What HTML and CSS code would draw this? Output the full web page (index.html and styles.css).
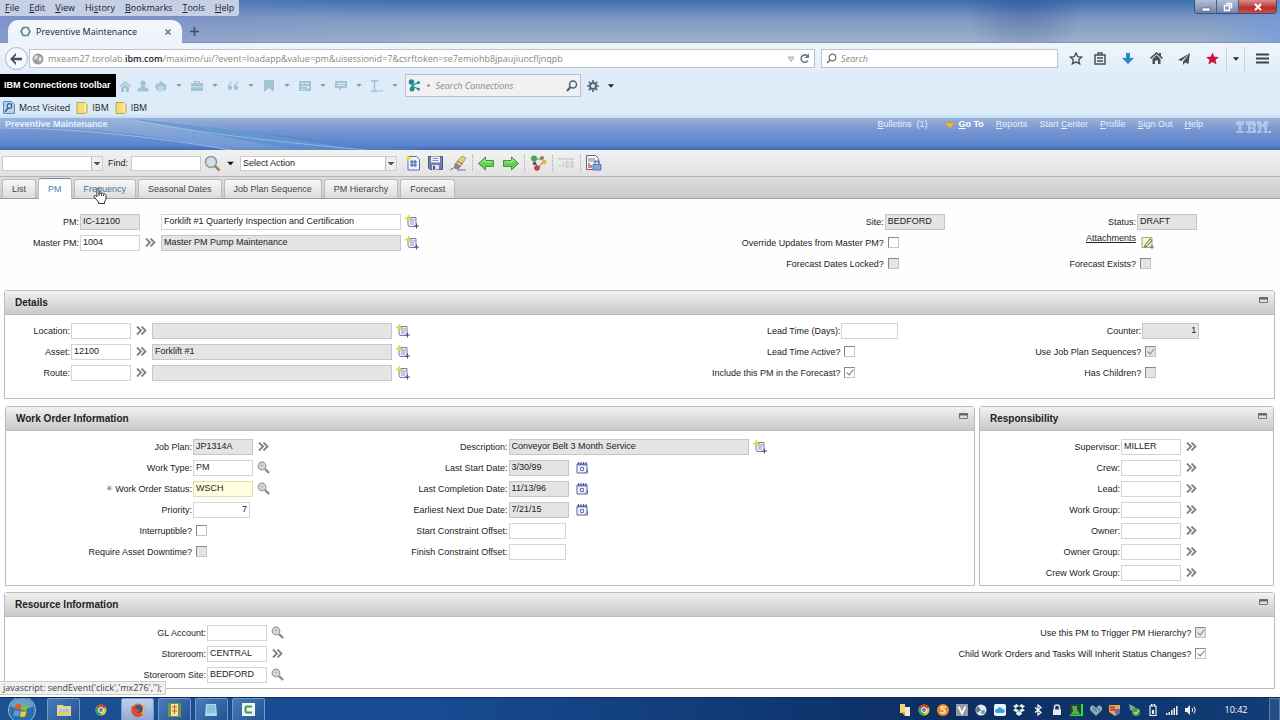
FILE: index.html
```html
<!DOCTYPE html>
<html lang="en">
<head>
<meta charset="utf-8">
<title>Preventive Maintenance</title>
<link rel="stylesheet" href="styles.css">
</head>
<body>
<svg class="sprite" aria-hidden="true">
  <symbol id="chev" viewBox="0 0 11 9"><path d="M1 .5l4 4-4 4M5.5.5l4 4-4 4" fill="none" stroke="#808080" stroke-width="1.800"/></symbol>
  <symbol id="long" viewBox="0 0 14 14"><path d="M3 2.500h8v7l1 2H4l-1-2z" fill="#eeeefa" stroke="#7c7cb4"/><path d="M5 5h5M5 7h4M5 9h4" stroke="#9a9ac4"/><path d="M9 11h5M11.500 8.500v5" stroke="#4b4b8c"/><path d="M3.500 0l1 2.500 2.500 1-2.500 1-1 2.500-1-2.500L0 3.500l2.500-1z" fill="#dfe03c" stroke="#b9bb3a" stroke-width=".4"/></symbol>
  <symbol id="lens" viewBox="0 0 13 13"><circle cx="5" cy="5" r="3.800" fill="#ddd" stroke="#999" stroke-width="1.200"/><path d="M3 4.500h4M5 3v4" stroke="#bbb"/><path d="M8 8l4 4" stroke="#888" stroke-width="2.400"/></symbol>
  <symbol id="cal" viewBox="0 0 12 13"><path d="M1 3h10v7l-2 2H1z" fill="#f2f2fb" stroke="#5a62a4"/><path d="M1 3.500h10" stroke="#7c84bd" stroke-width="2"/><path d="M2.500 1v3M5 1v3M7.500 1v3M10 1v3" stroke="#4b559b"/><path d="M4.500 6.500h3v3h-3zM11.500 8v4h-3" fill="none" stroke="#6a72ae"/></symbol>
  <symbol id="fold" viewBox="0 0 9 7"><path d="M.5.500h8v5h-8z" fill="#ddd" stroke="#777"/><path d="M0 1.500h9" stroke="#666" stroke-width="2"/></symbol>
  <symbol id="down" viewBox="0 0 7 4"><path d="M0 0h7L3.500 4z" fill="currentColor"/></symbol>
  <symbol id="folder" viewBox="0 0 12 13"><path d="M1 1.500h8l2 2v8l-2 1H1z" fill="#f3df74" stroke="#bca544"/><path d="M9 2v10" stroke="#fff3b0" stroke-width="1.500"/></symbol>
  <symbol id="chrome" viewBox="0 0 12 12"><circle cx="6" cy="6" r="5.500" fill="#e8c534"/><path d="M6 6L1.200 3.200A5.500 5.500 0 0 1 10.900 3.500z" fill="#d9432f"/><path d="M6 6L1.200 3.200A5.500 5.500 0 0 0 5.500 11.500L7 8z" fill="#45a048"/><circle cx="6" cy="6" r="2.500" fill="#3d7fd6" stroke="#fff"/></symbol>
</svg>

<header class="browser">
  <div class="titlebar">
    <div class="titlerow">
      <nav class="menubar" aria-label="Browser menu">
        <button><u>F</u>ile</button><button><u>E</u>dit</button><button><u>V</u>iew</button><button>Hi<u>s</u>tory</button><button><u>B</u>ookmarks</button><button><u>T</u>ools</button><button><u>H</u>elp</button>
      </nav>
      <div class="wincontrols">
        <button aria-label="Minimize"><svg width="10" height="10"><path d="M1 6h8v3H1z" fill="#fff" stroke="#445" stroke-width=".5"/></svg></button>
        <button aria-label="Restore"><svg width="10" height="10"><path d="M3.500 1.500h5v5M1.500 3.500h5v5h-5z" fill="none" stroke="#fff" stroke-width="1.500"/></svg></button>
        <button class="close" aria-label="Close"><svg width="10" height="10"><path d="M2 2l6 6M8 2l-6 6" stroke="#fff" stroke-width="2"/></svg></button>
      </div>
    </div>
    <div class="tabstrip">
      <div class="browsertab">
        <svg width="11" height="11" viewBox="0 0 11 11"><path d="M3.200 1.500h4.600L10 5.500 7.800 9.500H3.200L1 5.500z" fill="none" stroke="#5f8793" stroke-width="1.700"/></svg>
        <span class="tabtitle">Preventive Maintenance</span>
        <button aria-label="Close tab"><svg width="8" height="8"><path d="M1.500 1.500l5 5M6.500 1.500l-5 5" stroke="#777" stroke-width="1.700"/></svg></button>
      </div>
      <button class="newtab" aria-label="New tab"><svg width="9" height="9"><path d="M4.500 0v9M0 4.500h9" stroke="#3e4a66" stroke-width="1.500"/></svg></button>
    </div>
  </div>

  <div class="navbar">
    <button class="back" aria-label="Back"><svg width="13" height="12"><path d="M6 0v2.500L3.800 4.700H12v2.600H3.800L6 9.500V12L0 6z" fill="#4a5058"/></svg></button>
    <div class="urlbox">
      <svg width="12" height="12"><circle cx="6" cy="6" r="5.500" fill="#9c9c9c"/><path d="M3 2l3 1-1 3-3 1M8 3l2 3-2 3-2-2z" fill="#e2e2e2"/></svg>
      <span class="url">mxeam27.torolab.<b>ibm.com</b>/maximo/ui/?event=loadapp&amp;value=pm&amp;uisessionid=7&amp;csrftoken=se7emiohb8jpaujiuocfljnqpb</span>
      <svg width="8" height="6"><path d="M1 1h6L4 5.500z" fill="#ddd" stroke="#aaa"/></svg>
      <svg width="11" height="11"><path d="M8.500 3A3.700 3.700 0 1 0 9 7.500" fill="none" stroke="#777" stroke-width="1.600"/><path d="M10 .5v4.500H5.500z" fill="#777"/></svg>
    </div>
    <div class="searchbox">
      <svg width="11" height="11"><circle cx="6.500" cy="4.500" r="3.300" fill="none" stroke="#777" stroke-width="1.300"/><path d="M4 7L1 10" stroke="#777" stroke-width="1.700"/></svg>
      <input type="search" placeholder="Search" aria-label="Search the web">
    </div>
    <div class="navicons">
      <button class="star" aria-label="Bookmark"><svg width="14" height="13" viewBox="0 0 14 13"><path d="M7 1l1.700 3.700 4 .4-3 2.700.9 4L7 9.800l-3.600 2 .9-4-3-2.700 4-.4z" fill="none" stroke="#4a5058" stroke-width="1.400"/></svg></button>
      <button aria-label="Bookmarks list"><svg width="12" height="13"><path d="M1 3h10v9H1zM4 3V1h4v2M3 6h6M3 9h6" fill="none" stroke="#4a5058" stroke-width="1.500"/></svg></button>
      <button aria-label="Downloads"><svg width="12" height="13"><path d="M4 1h4v5h4L6 12 0 6h4z" fill="#2a8cc4"/></svg></button>
      <button aria-label="Home"><svg width="13" height="13"><path d="M.5 6.500l6-5.500 6 5.500" fill="none" stroke="#4a5058" stroke-width="1.600"/><path d="M2.500 7l4-4 4 4v5H8V8.500H5V12H2.500zM9 1h2v3H9z" fill="#4a5058"/></svg></button>
      <button aria-label="Share"><svg width="13" height="13"><path d="M12 1L0 8l3.500 1zM12 1L5 9.500V13l2-2.500 3.500 1.500z" fill="#4a5058"/></svg></button>
      <button aria-label="Favourite"><svg width="13" height="13" viewBox="0 0 14 13"><path d="M7 0l2 4.500 5 .4-3.800 3.200L11.500 13 7 10.300 2.500 13l1.300-4.900L0 4.900l5-.4z" fill="#cf1236"/></svg></button>
      <button class="narrow" aria-label="More"><svg width="6" height="4"><use href="#down"/></svg></button>
      <button class="burger" aria-label="Menu"><svg width="13" height="11"><path d="M0 1.500h13M0 5.500h13M0 9.500h13" stroke="#3d434b" stroke-width="2"/></svg></button>
    </div>
  </div>

  <div class="connbar">
    <strong>IBM Connections toolbar</strong>
    <div class="connicons">
      <svg width="12" height="12"><path d="M0 6l6-5 6 5-1 1-5-4-5 4zM2 7.500L6 4l4 3.500V12H7V8.500H5V12H2z"/></svg>
      <svg width="12" height="12" viewBox="0 0 13 12"><path d="M6.500 0a3 3 0 0 1 2 5.200V7l4 2v3H.5V9l4-2V5.200A3 3 0 0 1 6.500 0z"/></svg>
      <svg width="12" height="12" viewBox="0 0 13 12"><path d="M6.500 1a2 2 0 0 1 2 3l2-1 2 3-1 5H9V6H8v6H7V6H6v6H5V6H4v5H2L0 6l2-3 2.500 1a2 2 0 0 1 2-3z"/></svg>
      <svg class="dd" width="6" height="3"><use href="#down"/></svg>
      <svg width="12" height="12"><path d="M0 3h3V1h6v2h3v8H0zM4.500 2v1h3V2zM0 6.500h12v.7H0z" fill-rule="evenodd"/></svg>
      <svg class="dd" width="6" height="3"><use href="#down"/></svg>
      <svg width="12" height="12" viewBox="0 0 13 12"><path d="M5.500 1C2 2 1 5 1 8a2.400 2.400 0 1 0 2-2.400C3 4 4 3 5.500 2.300zM12 1C8.500 2 7.500 5 7.500 8a2.400 2.400 0 1 0 2-2.400C9.500 4 10.500 3 12 2.300z"/></svg>
      <svg class="dd" width="6" height="3"><use href="#down"/></svg>
      <svg width="12" height="12"><path d="M1 0h10v12L6 8l-5 4z"/></svg>
      <svg class="dd" width="6" height="3"><use href="#down"/></svg>
      <svg width="12" height="12"><path d="M0 1h12v10H0zM2 3v1h3V3zm4 0v1h4V3zM2 6v1h5V6zm6 0v3l2-1V6zM2 9v1h4V9z" fill-rule="evenodd"/></svg>
      <svg class="dd" width="6" height="3"><use href="#down"/></svg>
      <svg width="12" height="12"><path d="M0 1h12v7H7l-3 3V8H0zM2 3v1h8V3zm0 2v1h8V5z" fill-rule="evenodd"/></svg>
      <svg class="dd" width="6" height="3"><use href="#down"/></svg>
      <svg width="12" height="12"><path d="M0 0h7v1.500H4.300v9H7V12H0v-1.500h2.700v-9H0zM8 10h1.500v1.500H8zM10.500 10H12v1.500h-1.500z"/></svg>
      <svg class="dd" width="6" height="3"><use href="#down"/></svg>
    </div>
    <div class="connsearch">
      <svg width="13" height="13"><circle cx="3.500" cy="3" r="2.800" fill="#238a96"/><circle cx="4" cy="10" r="2.500" fill="#238a96"/><circle cx="10.500" cy="3.500" r="1.500" fill="#238a96"/><circle cx="10.500" cy="10" r="1.500" fill="#238a96"/><path d="M4 3v7M4 7l6-3.500M4 7l6 3" stroke="#238a96" stroke-width="1.300"/></svg>
      <span class="bullet"></span>
      <input type="search" placeholder="Search Connections" aria-label="Search Connections">
      <svg width="12" height="12"><circle cx="7" cy="4.500" r="3.500" fill="none" stroke="#4b617e" stroke-width="1.500"/><path d="M4.500 7L1 11" stroke="#4b617e" stroke-width="2"/></svg>
    </div>
    <button aria-label="Settings"><svg width="12" height="12"><circle cx="6" cy="6" r="3" fill="none" stroke="#5d6670" stroke-width="2"/><path d="M6 0v2M6 10v2M0 6h2M10 6h2M1.800 1.800l1.500 1.500M8.700 8.700l1.500 1.500M10.200 1.800L8.700 3.300M3.300 8.700l-1.500 1.500" stroke="#5d6670" stroke-width="1.700"/></svg></button>
    <button aria-label="Settings menu"><svg width="6" height="4"><use href="#down"/></svg></button>
  </div>

  <nav class="bookmarks" aria-label="Bookmarks">
    <a href="#"><svg width="12" height="13"><path d="M.5.500h8l3 3v9H.5z" fill="#b7d4ea" stroke="#6289ad"/><circle cx="6.500" cy="5" r="2.300" fill="none" stroke="#2d5f92" stroke-width="1.200"/><path d="M5 7l-3 4" stroke="#2d5f92" stroke-width="1.400"/></svg>Most Visited</a>
    <a href="#"><svg width="12" height="13"><use href="#folder"/></svg>IBM</a>
    <a href="#"><svg width="12" height="13"><use href="#folder"/></svg>IBM</a>
  </nav>
</header>

<main class="app">
  <header class="apphead">
    <svg class="swoosh" viewBox="0 0 420 32" preserveAspectRatio="none" aria-hidden="true"><path d="M0 8C60 8 130 12 225 32H360C270 18 190 2 120 0H0z" fill="#9fc4e6" opacity=".35"/><path d="M120 0c60 4 170 20 300 32H300C230 22 180 8 120 0z" fill="#4c8ac6" opacity=".5"/><path d="M0 10c80 0 160 10 230 22" fill="none" stroke="#b9d2f0" opacity=".6"/><path d="M125 0c60 14 150 24 240 32" fill="none" stroke="#a9cdf0" opacity=".6"/></svg>
    <h1>Preventive Maintenance</h1>
    <nav aria-label="Application">
      <a class="bulletins" href="#"><u>B</u>ulletins&nbsp; (1)</a>
      <a class="goto" href="#"><svg width="12" height="8"><path d="M0 1l5 1 6-1-4 6-3-1z" fill="#e9b64c" stroke="#b08437" stroke-width=".5"/></svg><span><u>G</u>o To</span></a>
      <a href="#"><u>R</u>eports</a>
      <a href="#">Start <u>C</u>enter</a>
      <a href="#"><u>P</u>rofile</a>
      <a href="#"><u>S</u>ign Out</a>
      <a href="#"><u>H</u>elp</a>
    </nav>
    <svg class="ibm" width="35" height="13" viewBox="0 0 35 13" role="img" aria-label="IBM"><path d="M0 1h8M0 3h8M2.500 5h3M2.500 7h3M2.500 9h3M0 11h8M10 1h9M10 3h10M12 5h2.500M17 5h3M12 7h7M12 9h2.500M17 9h3M10 11h10M21 1h4M28 1h4M21 3h5M27 3h5M22.500 5h8.500M22.500 7h3M27.500 7h3.500M22.500 9h2.500M28.500 9h2.500M21 11h4M26 11h1M28 11h4" stroke="#dce9fb" stroke-width="1.200"/><circle cx="33.800" cy="11" r="1" fill="#dce9fb"/></svg>
  </header>

  <div class="toolbar">
    <select class="quick" aria-label="Query"><option></option></select>
    <label for="find">Find:</label><input id="find" class="find" type="text">
    <button aria-label="Find"><svg width="17" height="17"><circle cx="7" cy="7" r="5.500" fill="#d5dfe6" stroke="#90999f" stroke-width="1.500"/><path d="M11 11l4.500 4.500" stroke="#a3835a" stroke-width="2.500"/></svg></button>
    <button aria-label="Search options"><svg width="7" height="5" viewBox="0 0 7 4"><use href="#down"/></svg></button>
    <select class="action" aria-label="Select Action"><option>Select Action</option></select>
    <div class="tools">
      <button aria-label="New"><svg width="16" height="16"><path d="M3 1.500h8.500l3 3V15H3z" fill="#eef2fc" stroke="#5670ac"/><path d="M7 5v7M10 5v7M5 7h7M5 10h7" stroke="#3750a0"/><path d="M3.500 0l1 2.500 2.500 1-2.500 1-1 2.500-1-2.500L0 3.500l2.500-1z" fill="#f4d631"/></svg></button>
      <button aria-label="Save"><svg width="15" height="16"><path d="M.5 1.500h14v13H2l-1.500-1.500z" fill="#707bae" stroke="#4c5686"/><path d="M3 1.500h9v6H3z" fill="#f1f3fa"/><path d="M4.500 3.500h6M4.500 5.500h6" stroke="#8790ba"/><path d="M4 10h7v4.500H4z" fill="#dfe2ee"/><path d="M5 11h2v3H5z" fill="#444d79"/></svg></button>
      <button aria-label="Clear"><svg width="17" height="16"><path d="M5 9L12 1l4 2-6 9z" fill="#e5d37a" stroke="#8c8667" stroke-width=".8"/><path d="M4 10l2-2 5 3-2 3H5z" fill="#8a8290"/><path d="M7 6l6 3M0 15l5-3M7 15h9" stroke="#77716c"/></svg></button>
      <i></i>
      <button aria-label="Previous"><svg width="17" height="15"><path d="M.5 7.500l7-6.500v3.500h8v6h-8V14z" fill="#67cb54" stroke="#3a993b"/><path d="M3 7l4-3.500V6h7" fill="none" stroke="#b7efa6"/></svg></button>
      <button aria-label="Next"><svg width="17" height="15"><path d="M16.500 7.500l-7-6.500v3.500h-8v6h8V14z" fill="#67cb54" stroke="#3a993b"/><path d="M3 6h7V3.500L13 6" fill="none" stroke="#b7efa6"/></svg></button>
      <i></i>
      <button aria-label="Change status"><svg width="17" height="16"><path d="M3 4h10M4 5l4 8 5-6" fill="none" stroke="#777"/><circle cx="4" cy="3.500" r="3" fill="#4aa745"/><circle cx="12" cy="3" r="2" fill="#7a8b67"/><circle cx="14" cy="7" r="2.500" fill="#e3bb3f"/><circle cx="4.500" cy="8.500" r="1.800" fill="#555"/><circle cx="7" cy="13" r="2.800" fill="#c93952"/></svg></button>
      <i></i>
      <button aria-label="Generate" disabled><svg width="17" height="14"><path d="M1 10h2M5 6v5M8 6h2v5H8zM13 6h2v5h-2zM0 3h16" fill="none" stroke="#ccc" stroke-width="1.300"/></svg></button>
      <i></i>
      <button aria-label="Reports"><svg width="16" height="16"><path d="M.5.500h9l3 3v11H.5z" fill="#f4f4fa" stroke="#5d688f"/><path d="M2 4h7M2 6h8" stroke="#7a84a8"/><path d="M3 8v5M5 10v3" stroke="#ca5b49" stroke-width="1.500"/><path d="M7 9.500h8V15H7z" fill="#88a7d9" stroke="#5375b0"/><path d="M9 9V6.500h4V9" fill="none" stroke="#5375b0" stroke-width="1.300"/></svg></button>
    </div>
  </div>

  <nav class="tabs" role="tablist">
    <button role="tab">List</button><button role="tab" class="active" aria-selected="true">PM</button><button role="tab" class="hover">Frequency<svg class="cursor" width="14" height="17"><path d="M4 1.500c1.200-.8 2 0 2 1v4l1-.5 1.500.6 1-.4 1.200.8 1.300-.2c.8.500 1 1 1 2v3.200L11.500 15v1.500H5.500V15L1 9.800c-.4-1 .6-1.700 1.500-1l1.300 1z" fill="#fff" stroke="#333"/><path d="M6 6v3M8.500 7v2M10.500 7.500V9" stroke="#333"/></svg></button><button role="tab">Seasonal Dates</button><button role="tab">Job Plan Sequence</button><button role="tab">PM Hierarchy</button><button role="tab">Forecast</button>
  </nav>

  <section class="summary cols three" aria-label="Record">
    <div class="col lead">
      <div class="row"><label for="pm">PM:</label><input id="pm" type="text" value="IC-12100" readonly><span class="slot"></span><input class="wide" type="text" value="Forklift #1 Quarterly Inspection and Certification" aria-label="PM description"><button class="ico" aria-label="Long description"><svg width="14" height="14"><use href="#long"/></svg></button></div>
      <div class="row"><label for="mpm">Master PM:</label><input id="mpm" type="text" value="1004"><button class="slot" aria-label="Master PM detail"><svg width="11" height="9"><use href="#chev"/></svg></button><input class="wide" type="text" value="Master PM Pump Maintenance" readonly aria-label="Master PM description"><button class="ico" aria-label="Long description"><svg width="14" height="14"><use href="#long"/></svg></button></div>
    </div>
    <div class="col mid">
      <div class="row"><label for="site">Site:</label><input id="site" type="text" value="BEDFORD" readonly></div>
      <div class="row"><label for="ovr">Override Updates from Master PM?</label><input id="ovr" type="checkbox"></div>
      <div class="row"><label for="fdl">Forecast Dates Locked?</label><input id="fdl" type="checkbox" disabled></div>
    </div>
    <div class="col end">
      <div class="row"><label for="st">Status:</label><input id="st" type="text" value="DRAFT" readonly></div>
      <div class="row attach"><a href="#">Attachments</a><button class="ico" aria-label="Attachments"><svg width="13" height="13"><path d="M1 1.500h10v10H1z" fill="#f3f5d4" stroke="#a8ab68"/><path d="M4 9l5-6 2 1.500-5 6-2.500.5z" fill="#dfe3b2" stroke="#6e7050"/><path d="M9 11h4M11 9v4" stroke="#777"/></svg></button></div>
      <div class="row"><label for="fe">Forecast Exists?</label><input id="fe" type="checkbox" disabled></div>
    </div>
  </section>

  <section class="panel details">
    <h2>Details<button aria-label="Collapse Details"><svg width="9" height="7"><use href="#fold"/></svg></button></h2>
    <div class="cols three">
      <div class="col lead">
        <div class="row"><label for="loc">Location:</label><input id="loc" type="text"><button class="slot" aria-label="Location detail"><svg width="11" height="9"><use href="#chev"/></svg></button><input class="wide" type="text" readonly aria-label="Location description"><button class="ico" aria-label="Long description"><svg width="14" height="14"><use href="#long"/></svg></button></div>
        <div class="row"><label for="asset">Asset:</label><input id="asset" type="text" value="12100"><button class="slot" aria-label="Asset detail"><svg width="11" height="9"><use href="#chev"/></svg></button><input class="wide" type="text" value="Forklift #1" readonly aria-label="Asset description"><button class="ico" aria-label="Long description"><svg width="14" height="14"><use href="#long"/></svg></button></div>
        <div class="row"><label for="route">Route:</label><input id="route" type="text"><button class="slot" aria-label="Route detail"><svg width="11" height="9"><use href="#chev"/></svg></button><input class="wide" type="text" readonly aria-label="Route description"><button class="ico" aria-label="Long description"><svg width="14" height="14"><use href="#long"/></svg></button></div>
      </div>
      <div class="col mid">
        <div class="row"><label for="ltd">Lead Time (Days):</label><input id="ltd" class="num" type="text"></div>
        <div class="row"><label for="lta">Lead Time Active?</label><input id="lta" type="checkbox"></div>
        <div class="row"><label for="inc">Include this PM in the Forecast?</label><input id="inc" type="checkbox" checked></div>
      </div>
      <div class="col end">
        <div class="row"><label for="cnt">Counter:</label><input id="cnt" class="num" type="text" value="1" readonly></div>
        <div class="row"><label for="seq">Use Job Plan Sequences?</label><input id="seq" type="checkbox" checked disabled></div>
        <div class="row"><label for="hc">Has Children?</label><input id="hc" type="checkbox" disabled></div>
      </div>
    </div>
  </section>

  <div class="pair">
    <section class="panel work">
      <h2>Work Order Information<button aria-label="Collapse Work Order Information"><svg width="9" height="7"><use href="#fold"/></svg></button></h2>
      <div class="cols two">
        <div class="col lead">
          <div class="row"><label for="jp">Job Plan:</label><input id="jp" type="text" value="JP1314A" readonly><button class="slot" aria-label="Job plan detail"><svg width="11" height="9"><use href="#chev"/></svg></button></div>
          <div class="row"><label for="wt">Work Type:</label><input id="wt" type="text" value="PM"><button class="slot" aria-label="Select work type"><svg width="13" height="13"><use href="#lens"/></svg></button></div>
          <div class="row"><label for="wos"><span class="req">✳</span> Work Order Status:</label><input id="wos" class="required" type="text" value="WSCH"><button class="slot" aria-label="Select status"><svg width="13" height="13"><use href="#lens"/></svg></button></div>
          <div class="row"><label for="pri">Priority:</label><input id="pri" class="num" type="text" value="7"></div>
          <div class="row"><label for="intr">Interruptible?</label><input id="intr" type="checkbox"></div>
          <div class="row"><label for="rad">Require Asset Downtime?</label><input id="rad" type="checkbox" disabled></div>
        </div>
        <div class="col end">
          <div class="row"><label for="desc">Description:</label><input id="desc" class="wide" type="text" value="Conveyor Belt 3 Month Service" readonly><button class="ico" aria-label="Long description"><svg width="14" height="14"><use href="#long"/></svg></button></div>
          <div class="row"><label for="lsd">Last Start Date:</label><input id="lsd" type="text" value="3/30/99" readonly><button class="slot date" aria-label="Pick date"><svg width="12" height="13"><use href="#cal"/></svg></button></div>
          <div class="row"><label for="lcd">Last Completion Date:</label><input id="lcd" type="text" value="11/13/96" readonly><button class="slot date" aria-label="Pick date"><svg width="12" height="13"><use href="#cal"/></svg></button></div>
          <div class="row"><label for="end">Earliest Next Due Date:</label><input id="end" type="text" value="7/21/15" readonly><button class="slot date" aria-label="Pick date"><svg width="12" height="13"><use href="#cal"/></svg></button></div>
          <div class="row"><label for="sco">Start Constraint Offset:</label><input id="sco" class="num" type="text"></div>
          <div class="row"><label for="fco">Finish Constraint Offset:</label><input id="fco" class="num" type="text"></div>
        </div>
      </div>
    </section>
    <section class="panel resp">
      <h2>Responsibility<button aria-label="Collapse Responsibility"><svg width="9" height="7"><use href="#fold"/></svg></button></h2>
      <div class="cols">
        <div class="col">
          <div class="row"><label for="sup">Supervisor:</label><input id="sup" type="text" value="MILLER"><button class="slot" aria-label="Supervisor detail"><svg width="11" height="9"><use href="#chev"/></svg></button></div>
          <div class="row"><label for="crew">Crew:</label><input id="crew" type="text"><button class="slot" aria-label="Crew detail"><svg width="11" height="9"><use href="#chev"/></svg></button></div>
          <div class="row"><label for="lead">Lead:</label><input id="lead" type="text"><button class="slot" aria-label="Lead detail"><svg width="11" height="9"><use href="#chev"/></svg></button></div>
          <div class="row"><label for="wg">Work Group:</label><input id="wg" type="text"><button class="slot" aria-label="Work group detail"><svg width="11" height="9"><use href="#chev"/></svg></button></div>
          <div class="row"><label for="own">Owner:</label><input id="own" type="text"><button class="slot" aria-label="Owner detail"><svg width="11" height="9"><use href="#chev"/></svg></button></div>
          <div class="row"><label for="og">Owner Group:</label><input id="og" type="text"><button class="slot" aria-label="Owner group detail"><svg width="11" height="9"><use href="#chev"/></svg></button></div>
          <div class="row"><label for="cwg">Crew Work Group:</label><input id="cwg" type="text"><button class="slot" aria-label="Crew work group detail"><svg width="11" height="9"><use href="#chev"/></svg></button></div>
        </div>
      </div>
    </section>
  </div>

  <section class="panel resource">
    <h2>Resource Information<button aria-label="Collapse Resource Information"><svg width="9" height="7"><use href="#fold"/></svg></button></h2>
    <div class="cols two">
      <div class="col lead">
        <div class="row"><label for="gl">GL Account:</label><input id="gl" type="text"><button class="slot" aria-label="Select GL account"><svg width="13" height="13"><use href="#lens"/></svg></button></div>
        <div class="row"><label for="sr">Storeroom:</label><input id="sr" type="text" value="CENTRAL"><button class="slot" aria-label="Storeroom detail"><svg width="11" height="9"><use href="#chev"/></svg></button></div>
        <div class="row"><label for="ss">Storeroom Site:</label><input id="ss" type="text" value="BEDFORD"><button class="slot" aria-label="Select site"><svg width="13" height="13"><use href="#lens"/></svg></button></div>
      </div>
      <div class="col end">
        <div class="row"><label for="trg">Use this PM to Trigger PM Hierarchy?</label><input id="trg" type="checkbox" checked disabled></div>
        <div class="row"><label for="inh">Child Work Orders and Tasks Will Inherit Status Changes?</label><input id="inh" type="checkbox" checked></div>
      </div>
    </div>
  </section>
  <div class="linkstatus">javascript: sendEvent('click','mx276','');</div>
</main>

<footer class="taskbar">
  <button class="start" aria-label="Start"><svg width="30" height="24" viewBox="0 0 30 24"><circle cx="15" cy="12" r="13.500" fill="#2f6ea5" stroke="#8fc0e6"/><path d="M3 8a13 13 0 0 1 24 0c-7 4-17 4-24 0z" fill="#9fc8e6" opacity=".55"/><path d="M8.500 7q3-2 5.500-.5L13 12q-3-1.500-5.500 0z" fill="#e4572a"/><path d="M15 7q3 1.500 6 0l-1.200 5.300q-3 1-5.800-.3z" fill="#85bf3d"/><path d="M7.300 13q3-1.500 5.500 0l-1.200 5.300Q9 17 6 18.500z" fill="#4d9ee0"/><path d="M13.800 13q3 1.500 5.800 0l-1.200 5.300q-3 1.500-5.800 0z" fill="#f5c833"/></svg></button>
  <button class="task" aria-label="File Explorer"><svg width="14" height="14"><path d="M0 2h6l1 1h7v10H0z" fill="#ead68a"/><path d="M2 6h10v6H2z" fill="#9dc9e8"/><path d="M1 9h12v4H1z" fill="#e3ca74"/></svg></button>
  <button class="task flat" aria-label="Chrome"><svg width="12" height="12"><use href="#chrome"/></svg></button>
  <button class="task lit" aria-label="Firefox"><svg width="14" height="14"><circle cx="7" cy="7" r="6.500" fill="#e2692a"/><circle cx="7.500" cy="6" r="4" fill="#36529e"/><path d="M1 3c3 1 4 2 5 3l3 1c-1 3-4 3-6 1 2 4 8 4 9-2 2 5-2 8-5 8C2 14-1 9 1 3z" fill="#dc4b28"/><path d="M12 3q2 4-1 8" fill="none" stroke="#f7b934" stroke-width="1.500"/></svg></button>
  <button class="task" aria-label="Calculator"><svg width="13" height="14"><path d="M0 0h13v14H0z" fill="#779442"/><path d="M3 1h7v12H3z" fill="#f2e6a2"/><path d="M4 4h5M6.500 2v9M4 8h5" stroke="#cc5634"/></svg></button>
  <button class="task" aria-label="Notepad"><svg width="13" height="14"><path d="M1 1h10l1 12H0z" fill="#a9d9ec"/><path d="M2 3h8M2 5h8M2 7h8M2 9h8" stroke="#6cabc6"/></svg></button>
  <button class="task" aria-label="Camtasia"><svg width="13" height="14"><path d="M0 0h13v13H0z" fill="#f2f6f3"/><path d="M10 3.500H5Q3.500 3.500 3.500 5v3Q3.500 9.500 5 9.500h5" fill="none" stroke="#2f9b55" stroke-width="2"/></svg></button>
  <div class="tray">
    <svg width="12" height="12"><path d="M1 0h5v9H1z" fill="#f4d675"/><path d="M6 3h5v9H6z" fill="#efe9d2"/><path d="M2 8h4v4z" fill="#d4a83b"/></svg>
    <svg width="12" height="12"><use href="#chrome"/></svg>
    <svg width="12" height="12"><circle cx="6" cy="6" r="6" fill="#ef8b2c"/><path d="M9 3.500Q4 1.500 4 4.500q4 1 4 3 0 2.500-5 1" fill="none" stroke="#fff1d4" stroke-width="1.300"/></svg>
    <svg width="12" height="12"><path d="M0 0h12v12H0z" fill="#969a9d"/><path d="M2.500 2.500L6 9.500l3.500-7" fill="none" stroke="#fff" stroke-width="1.800"/></svg>
    <svg width="12" height="12"><circle cx="6" cy="6" r="5.500" fill="#dfe9ee"/><path d="M6 6L3 2a5 5 0 0 0-1 7z" fill="#65788e"/><circle cx="8" cy="8" r="2" fill="#7595b4"/></svg>
    <svg width="12" height="12"><rect width="12" height="12" rx="2" fill="#eef6fc"/><path d="M3 9a2 2 0 0 1 0-4 3 3 0 0 1 5.500 0A2 2 0 0 1 9 9z" fill="#3b9ee2"/></svg>
    <svg width="12" height="12"><path d="M3.500 0L6 2 2.500 4.200 0 2.300zM8.500 0L6 2l3.500 2.200L12 2.300zM0 6.300l2.500-2L6 6.500 3.500 8.300zM12 6.300l-2.500-2L6 6.500l2.500 1.800zM3 9l3-2 3 2v1l-3 2-3-2z" fill="#e3f1e9"/></svg>
    <svg width="12" height="12"><path d="M3 3.500l6 5L6 11V1l3 2.500-6 5" fill="none" stroke="#fff" stroke-width="1.200"/></svg>
    <svg width="12" height="12"><path d="M2 5.500h8V11H2z" fill="#e8e8e8"/><path d="M3.500 6V3a2.500 2 0 0 1 5 0v3" fill="none" stroke="#e8e8e8" stroke-width="1.500"/></svg>
    <svg width="13" height="12"><path d="M0 0h13v12H0z" fill="#254434"/><path d="M2 2h5v4l3 4H1l2-3z" fill="#61a85b"/><path d="M11 0h2v12h-2zM0 10.500h13V12H0z" fill="#22e338"/></svg>
    <svg width="12" height="12"><path d="M0 3l3-2 3 3 3-3 3 2v3l-6 6-6-6z" fill="#87a9b0"/><path d="M3 4l4 4M6 3l4 4" stroke="#4a6675"/></svg>
    <svg width="12" height="12"><path d="M0 1h11v8l-5 3-6-4z" fill="#e0b244"/><path d="M1 2h5v5H1z" fill="#dd4c41"/><path d="M5 5h6v4L7 11z" fill="#7263b5"/></svg>
    <svg width="12" height="12"><path d="M1 0l6 3v5L2 6z" fill="#8d9c9a"/><circle cx="8" cy="8" r="4" fill="#44a548"/><path d="M6 8l2 2 3-4" fill="none" stroke="#fff"/></svg>
    <svg width="12" height="12"><path d="M3 2h6v9.500H3zM4.500 0h3v2h-3z" fill="none" stroke="#f2f2f2" stroke-width="1.200"/><path d="M5 6h2v4H5z" fill="#f2f2f2"/></svg>
    <svg width="12" height="12"><path d="M0 9h1.500v2H0zM2.500 8H4v3H2.500zM5 6h1.500v5H5zM7.500 4H9v7H7.500zM10 2h1.500v9H10z" fill="#f2f2f2"/></svg>
    <svg width="12" height="12"><path d="M0 4h2l3-3v10L2 8H0z" fill="#f2f2f2"/><path d="M7 4q1.500 2 0 4M9 2.500q2.500 3.500 0 7" fill="none" stroke="#f2f2f2"/></svg>
  </div>
  <time>10:42</time>
  <button class="desktop" aria-label="Show desktop"></button>
</footer>
</body>
</html>
```
FILE: styles.css
```css
* { box-sizing: border-box; }

body {
  margin: 0;
  min-height: 100vh;
  display: flex;
  flex-direction: column;
  background: #fefefe;
  color: #222;
  font: 9px/12px "Liberation Sans", Arial, sans-serif;
}

button {
  display: inline-flex;
  align-items: center;
  justify-content: center;
  margin: 0;
  padding: 0;
  border: 0;
  background: none;
  color: inherit;
  font: inherit;
}

svg { display: block; flex: none; }
.sprite { position: absolute; width: 0; height: 0; }
input, select { font: inherit; color: inherit; margin: 0; border-radius: 0; min-width: 0; }
a { color: inherit; }

/* Browser chrome */
.browser { font-family: "Open Sans", "Noto Sans", sans-serif; font-size: 9px; color: #222; }

.titlebar {
  height: 43px;
  border-bottom: 1px solid #7f92b8;
  background:
    radial-gradient(circle at 80% 0, #24478c66 0, transparent 6%),
    linear-gradient(90deg, #7d8ecf99 0, transparent 32%, transparent 94%, #6f9ae0aa 100%),
    linear-gradient(#3b6fb0, #8199c2 45%, #9bb0ca);
}
.titlerow { display: flex; justify-content: space-between; height: 16px; }
.menubar {
  display: flex;
  gap: 10px;
  padding: 0 5px;
  background: #c5cfe6;
  border-radius: 0 0 3px 0;
}
.menubar u { text-underline-offset: 1px; }
.wincontrols { display: flex; height: 14px; margin-right: 3px; border: 1px solid #3b4d75; border-top: 0; border-radius: 0 0 4px 4px; overflow: hidden; }
.wincontrols button { width: 22px; background: linear-gradient(#b2c0d9, #6d83ac); border-right: 1px solid #4c5f88; }
.wincontrols .close { width: 37px; border: 0; background: linear-gradient(#dc9090, #b62f2d 60%, #c95344); }

.tabstrip { display: flex; align-items: center; padding: 4px 0 0 8px; }
.browsertab {
  display: flex;
  align-items: center;
  gap: 5px;
  width: 174px;
  height: 23px;
  padding: 0 10px 0 12px;
  background: linear-gradient(#f4f7fd, #edf3fb);
  border-radius: 10px 10px 0 0;
}
.tabtitle { flex: 1; white-space: nowrap; }
.newtab { width: 24px; height: 22px; }

.navbar {
  display: flex;
  align-items: center;
  height: 31px;
  padding-left: 5px;
  background: linear-gradient(#f0f5fc, #e1edf9);
}
.back { width: 23px; height: 23px; border: 1px solid #a9b8cb; border-radius: 50%; background: #f6f9fd; }
.urlbox {
  display: flex;
  flex: 1;
  align-items: center;
  gap: 4px;
  height: 19px;
  margin-left: 1px;
  padding: 0 4px 0 2px;
  background: #fff;
  border: 1px solid #b8c5d6;
  color: #888;
}
.url { flex: 1; white-space: nowrap; }
.url b { color: #222; font-weight: 600; }
.searchbox {
  display: flex;
  align-items: center;
  gap: 4px;
  width: 237px;
  height: 19px;
  margin-left: 6px;
  padding-left: 4px;
  background: #fff;
  border: 1px solid #b8c5d6;
}
.searchbox input, .connsearch input { flex: 1; padding: 0; border: 0; background: none; font-style: italic; appearance: none; }
::placeholder { color: #888; opacity: 1; }
.navicons { display: flex; align-items: center; margin-left: 8px; }
.navicons button { width: 28px; height: 24px; }
.navicons .star { width: 20px; }
.navicons .narrow { width: 18px; border-left: 1px solid #c7d1de; }
.navicons .burger { width: 36px; border-left: 1px solid #c7d1de; }

.connbar { display: flex; align-items: center; height: 23px; background: #deebf8; }
.connbar strong {
  align-self: stretch;
  padding: 0 5px 0 4px;
  background: #000;
  color: #fff;
  font: bold 9px/22px "Liberation Sans", Arial, sans-serif;
  white-space: nowrap;
}
.connicons { display: flex; align-items: center; gap: 6px; padding-left: 3px; color: #8899a4; fill: #a2c3d3; }
.connicons .dd { margin: 0 3px; }
.connsearch {
  display: flex;
  align-items: center;
  width: 176px;
  height: 23px;
  margin: 0 6px 0 4px;
  padding: 0 2px;
  gap: 6px;
  background: #f1f1f4;
  border: 1px solid #b5bfd0;
}
.bullet { width: 3px; height: 3px; border-radius: 50%; background: #999; }
.connbar button { margin-right: 9px; }

.bookmarks { display: flex; gap: 6px; align-items: center; height: 21px; padding-left: 3px; background: linear-gradient(#deebf8, #dcebf9 80%, #c4dcf5); }
.bookmarks a { display: flex; gap: 4px; align-items: center; text-decoration: none; }

/* Application header */
.app { flex: 1; position: relative; }
.apphead {
  position: relative;
  display: flex;
  align-items: flex-start;
  height: 32px;
  padding: 0 9px 0 5px;
  background: linear-gradient(#9ab0d6, #7695d0 40%, #5b84d0 85%, #4669b5);
  color: #e6effc;
}
.swoosh { position: absolute; left: 0; top: 0; width: 33%; height: 100%; }
.apphead h1 { position: relative; flex: 1; margin: 0; font: bold 9px/13px "Liberation Sans", Arial, sans-serif; }
.apphead nav { display: flex; gap: 12px; line-height: 13px; margin-right: 33px; }
.apphead a { text-decoration: none; }
.apphead .bulletins { margin-right: 4px; }
.apphead .goto { display: flex; gap: 3px; align-items: center; font-weight: bold; color: #fff; }
.ibm { margin-top: 3px; }

.toolbar {
  display: flex;
  align-items: center;
  height: 27px;
  padding-left: 2px;
  background: linear-gradient(#f2f2f3, #e2e2e3);
  border-bottom: 1px solid #b5b5b5;
}
.toolbar select, .find { height: 15px; padding: 0 2px; border: 1px solid #ccc; background: #fff; }
.toolbar select {
  appearance: none;
  background:
    conic-gradient(from -45deg at 50% 100%, #555 90deg, transparent 0) right 2px top 5px / 6px 3px no-repeat,
    linear-gradient(90deg, #bbb 1px, #eee 1px) right / 11px 100% no-repeat,
    #fff;
}
.quick { width: 101px; margin-right: 5px; }
.find { width: 70px; margin: 0 3px; }
.toolbar > button { margin-right: 6px; color: #111; }
.action { width: 157px; }
.tools { display: flex; align-items: center; gap: 7px; padding-left: 8px; }
.tools i { width: 1px; height: 16px; margin: 0 -2px; border-left: 1px dotted #aaa; }

.tabs {
  display: flex;
  align-items: flex-end;
  gap: 2px;
  height: 22px;
  padding-left: 2px;
  background: linear-gradient(#dedede, #c9c9c9);
  border-bottom: 1px solid #9c9c9c;
}
.tabs button {
  position: relative;
  height: 19px;
  padding: 0 9px;
  color: #444;
  background: linear-gradient(#f8f8f8, #dcdcdc);
  border: 1px solid #bbb;
  border-bottom: 0;
  border-radius: 3px 3px 0 0;
  white-space: nowrap;
}
.tabs .active { height: 21px; margin-bottom: -1px; background: #fff; color: #4d7fae; border-top-color: #6b8db0; }
.tabs .hover { color: #4672a5; }
.cursor { position: absolute; left: 18px; top: 7px; z-index: 1; }

/* Forms */
.cols { display: grid; }
.three { grid-template-columns: 700fr 300fr 270fr; }
.row { display: flex; align-items: center; height: 21px; }
.row label, .attach a { width: var(--label); padding-right: 1px; text-align: right; white-space: nowrap; flex: none; }
.row label { display: flex; justify-content: flex-end; gap: 2px; }
.row input[type="text"] {
  width: 60px;
  height: 16px;
  padding: 0 2px 2px;
  border: 1px solid #d4d4d4;
  background: #fff;
}
.row input[type="text"][readonly] { background: #e4e4e4; border-color: #c6c6c6; }
.row input[type="text"].wide { width: 240px; }
.row input[type="text"].num { width: 57px; text-align: right; }
.row input[type="text"].required { background: #ffffe0; border-color: #dfdfb4; }
.row input[type="checkbox"] {
  appearance: none;
  width: 11px;
  height: 11px;
  margin-left: 3px;
  border: 1px solid #c4c4c4;
  border-top-color: #888;
  border-left-color: #888;
  background: #fff;
}
.row input[type="checkbox"]:disabled { background: #e4e4e4; }
.row input[type="checkbox"]:checked::after {
  content: "";
  display: block;
  width: 3px;
  height: 6px;
  margin: 0 0 0 3px;
  border: solid #68798c;
  border-width: 0 1px 1px 0;
  transform: rotate(40deg);
}
.row input[type="checkbox"]:disabled:checked::after { border-color: #888; }
.slot { width: 21px; flex: none; }
.slot.date { width: 26px; }
.ico { margin-left: 4px; }
.attach a { align-self: flex-start; }
.req { font-size: 8px; color: #555; }

.summary { padding: 12px 5px 16px 0; }
.summary .lead { --label: 80px; }
.summary .mid { --label: 182px; }
.summary .end { --label: 133px; }

.panel { border: 1px solid #bbb; border-radius: 3px 3px 0 0; background: #fff; }
.panel h2 {
  display: flex;
  justify-content: space-between;
  height: 24px;
  margin: 0;
  padding: 0 6px 0 10px;
  background: linear-gradient(#f2f2f2, #e0e0e0 40%, #cacaca);
  border-bottom: 1px solid #bdbdbd;
  font: bold 10px/24px "Liberation Sans", Arial, sans-serif;
}
.panel h2 button { height: 18px; }
.panel .cols { padding: 5px 0 15px; }

.details { margin: 0 5px 7px 4px; }
.details .lead { --label: 66px; }
.details .mid { --label: 137px; }
.details .end { --label: 138px; }

.pair { display: grid; grid-template-columns: 970fr 295fr; gap: 4px; margin: 0 6px 6px 5px; }
.work .cols { grid-template-columns: 400fr 569fr; }
.work .lead { --label: 187px; }
.work .end { --label: 103px; }
.resp .col { --label: 141px; }
.panel.resp .cols { padding-bottom: 2px; }
.resource { margin: 0 5px 8px 4px; }
.resource .cols { grid-template-columns: 900fr 370fr; padding-bottom: 3px; }
.resource .lead { --label: 202px; }
.resource .end { --label: 288px; }

.linkstatus {
  position: absolute;
  left: 0;
  bottom: 2px;
  padding: 0 3px;
  background: #f0f0f0;
  border: 1px solid #ccc;
  border-left: 0;
  color: #444;
  font: 9px/12px "Open Sans", "Noto Sans", sans-serif;
}

/* Taskbar */
.taskbar {
  display: flex;
  align-items: stretch;
  height: 24px;
  padding-left: 6px;
  background: linear-gradient(90deg, #1d4f93, #174a91 35%, #0c2d60 75%, #123d78);
  border-top: 1px solid #0c2a58;
  color: #fff;
  font-family: "Open Sans", "Noto Sans", sans-serif;
}
.start { width: 32px; margin-right: 9px; }
.task { width: 33px; margin-right: 4px; border: 1px solid #6f9bd0; border-radius: 2px; background: linear-gradient(135deg, #4a7bb9, #235493); }
.task.flat { border-color: transparent; background: none; }
.task.lit { background: linear-gradient(#c3d1e8, #8ea9d2); }
.tray { display: flex; align-items: center; gap: 7px; margin-left: auto; }
.taskbar time { width: 72px; padding-left: 6px; text-align: center; line-height: 23px; }
.desktop { width: 11px; border: 1px solid #5e7ba5; background: #274f87; }
```
